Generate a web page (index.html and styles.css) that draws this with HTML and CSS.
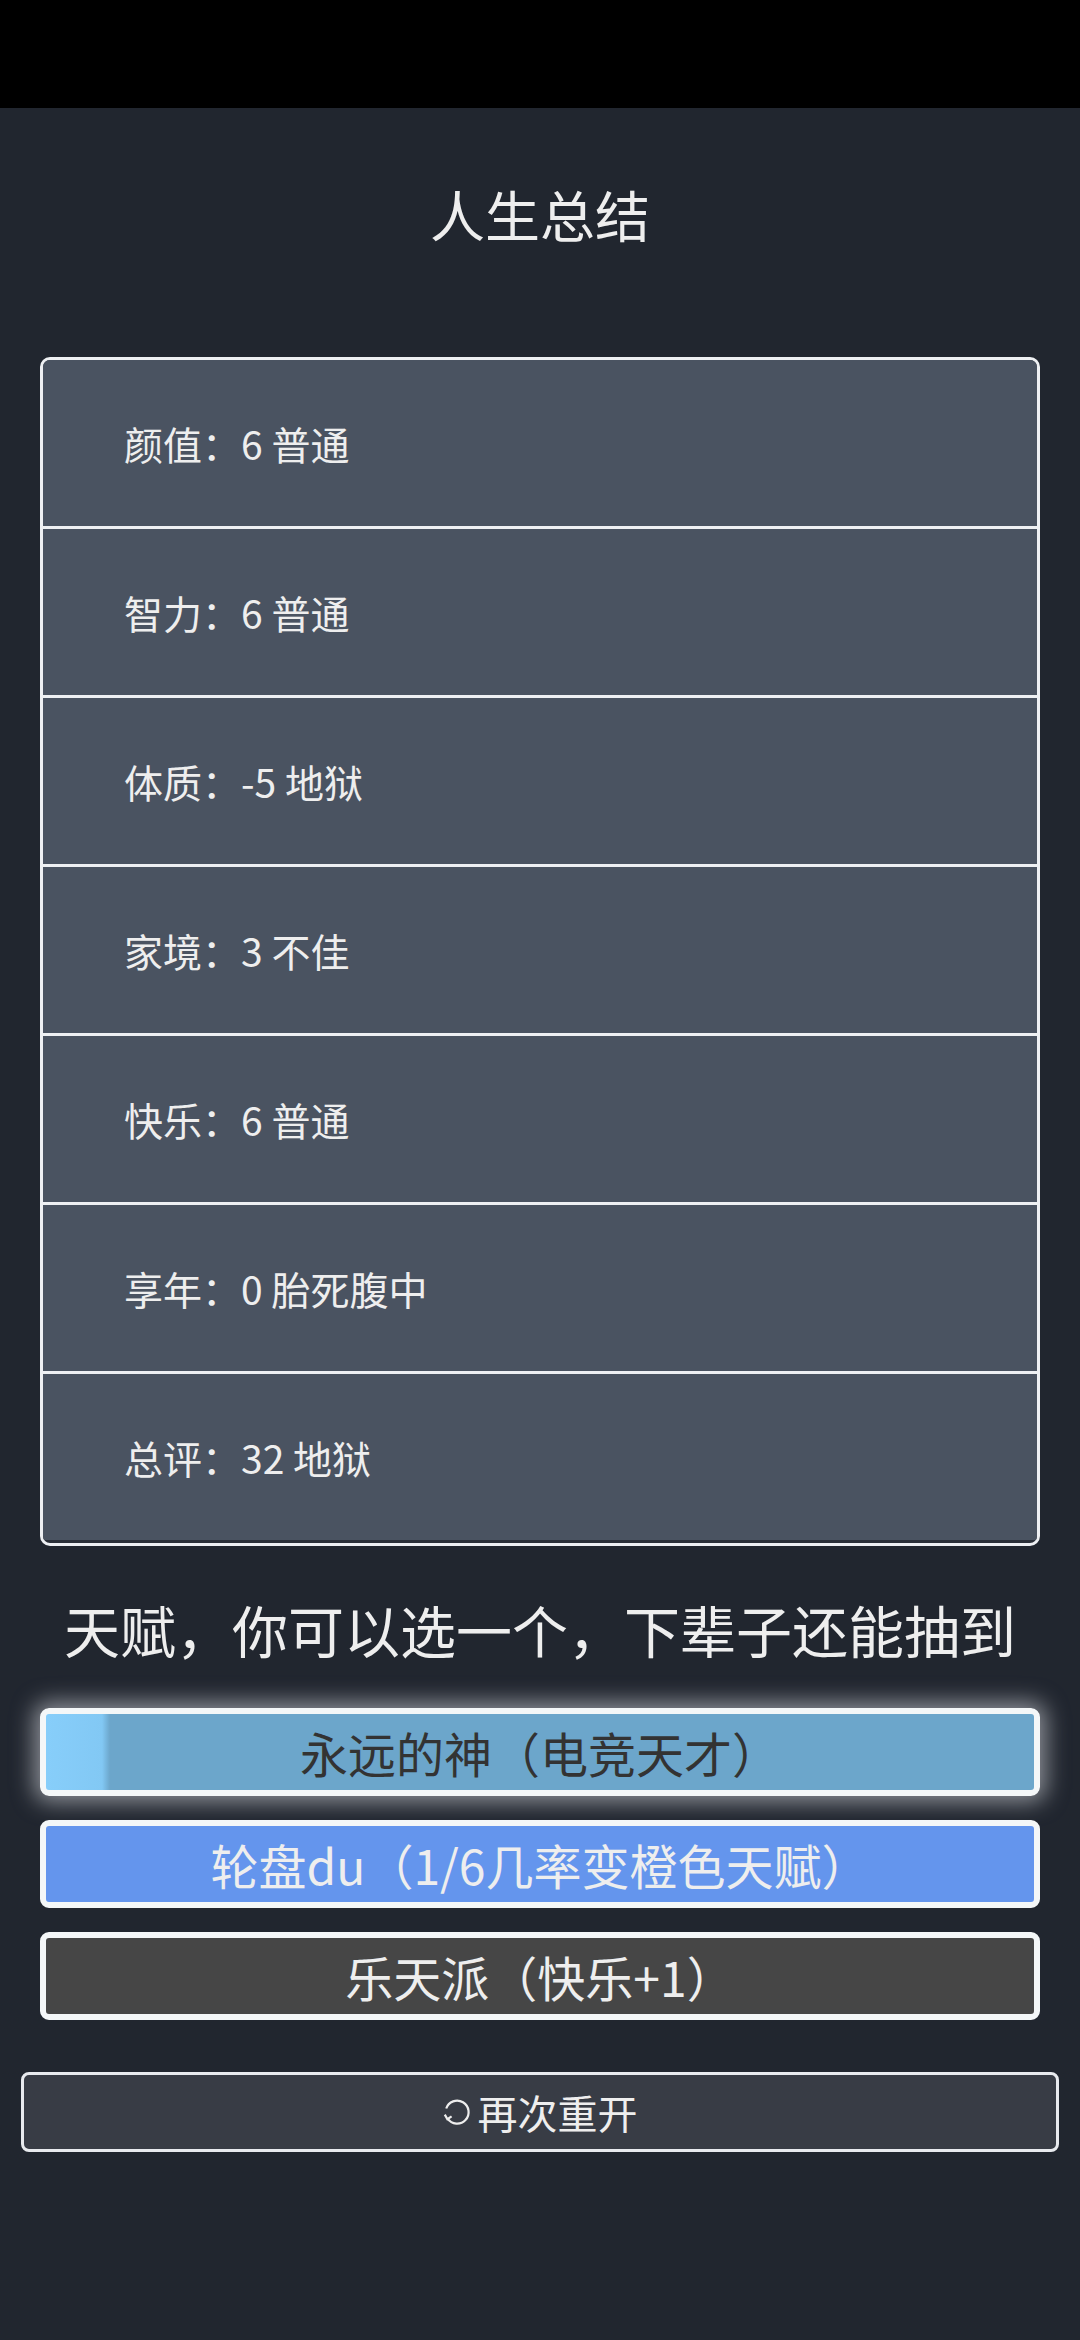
FILE: index.html
```html
<!DOCTYPE html>
<html>
<head>
  <meta charset="UTF-8">
  <title>人生总结</title>
  <link rel="stylesheet" href="styles.css">
</head>
<body>

  <div class="status-bar"></div>

  <div class="page">
    <h1 class="title">人生总结</h1>

    <ul class="summary">
      <li class="summary-row">颜值：6 普通</li>
      <li class="summary-row">智力：6 普通</li>
      <li class="summary-row">体质：-5 地狱</li>
      <li class="summary-row">家境：3 不佳</li>
      <li class="summary-row">快乐：6 普通</li>
      <li class="summary-row">享年：0 胎死腹中</li>
      <li class="summary-row">总评：32 地狱</li>
    </ul>

    <div class="talent-hint">天赋，你可以选一个，下辈子还能抽到</div>

    <ul class="talents">
      <li class="talent talent-selected">永远的神（电竞天才）</li>
      <li class="talent talent-blue">轮盘du（1/6几率变橙色天赋）</li>
      <li class="talent talent-grey">乐天派（快乐+1）</li>
    </ul>

    <button class="restart">
      <svg class="restart-icon" width="28" height="28" viewBox="0 0 28 28">
        <path d="M3.2 10.5 A11.5 11.5 0 1 1 4.6 20.6" fill="none" stroke="#eeeeee" stroke-width="2.2"/>
        <path d="M1.8 16.6 L4.4 21.2 L8.6 18.4" fill="none" stroke="#eeeeee" stroke-width="2.2"/>
      </svg>
      再次重开
    </button>
  </div>

</body>
</html>
```

FILE: styles.css
```css
body {
  margin: 0;
  background-color: #21262f;
  color: #eeeeee;
  font-family: "Noto Sans CJK SC", "Noto Sans", sans-serif;
}
/* phone status bar */
.status-bar {
  height: 108px;
  background-color: #000000;
}
.page {
  padding: 0 21px;
}
.title {
  margin: 65px 0 0;
  text-align: center;
  font-size: 55px;
  font-weight: normal;
  line-height: 81px;
}
/* Summary table */
.summary {
  list-style: none;
  margin: 103px 19px 0;
  padding: 0 0 3px;
  border: 3px solid #eef0f3;
  border-radius: 10px;
  background-color: #2a2f38;
  overflow: hidden;
}
.summary-row {
  height: 166px;
  display: flex;
  align-items: center;
  padding-left: 81px;
  font-size: 39px;
  background-color: #4a5361;
  border-bottom: 3px solid #eef0f3;
}
.summary-row:last-child {
  border-bottom: none;
}
/* Talents */
.talent-hint {
  margin-top: 42px;
  text-align: center;
  font-size: 56px;
  line-height: 82px;
}
.talents {
  list-style: none;
  margin: 38px 19px 0;
  padding: 0;
  display: flex;
  flex-direction: column;
  gap: 24px;
}
.talent {
  height: 76px;
  border: 6px solid #f4f7f8;
  border-radius: 9px;
  display: flex;
  align-items: center;
  justify-content: center;
  font-size: 48px;
}
.talent-selected {
  color: #333333;
  background: linear-gradient(to right, #87cefa 0, #82c8f4 56px, #6ca6cb 64px);
  box-shadow: 0 0 22px 6px rgba(230, 232, 236, 0.55);
}
.talent-blue {
  background-color: #6495ed;
}
.talent-grey {
  background-color: #464646;
}
/* Restart button */
.restart {
  box-sizing: border-box;
  margin-top: 52px;
  width: 100%;
  height: 80px;
  padding: 0;
  border: 3px solid #e8eaee;
  border-radius: 8px;
  background-color: #383c45;
  color: #eeeeee;
  font-family: inherit;
  font-size: 40px;
  display: flex;
  align-items: center;
  justify-content: center;
  gap: 7px;
}
.restart-icon {
  display: block;
}
```
